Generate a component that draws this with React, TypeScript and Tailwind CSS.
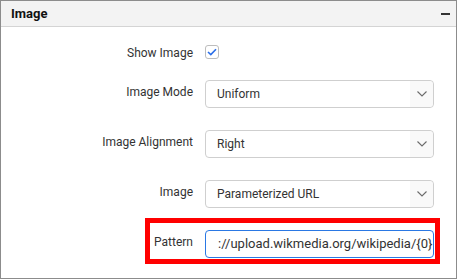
import React from "react";

function Chevron() {
  return (
    <svg width="12" height="8" viewBox="0 0 12 8" fill="none">
      <path d="M1.5 1.5 L6 6 L10.5 1.5" stroke="#6b6b6b" strokeWidth="1.1" />
    </svg>
  );
}

function Select({ value }: { value: string }) {
  return (
    <div className="flex h-[28px] w-[229px] items-stretch rounded-[4px] border border-[#cfcfcf] bg-white">
      <div className="flex flex-1 items-center pl-[11px] text-[12px] text-[#333]">{value}</div>
      <div className="flex w-[23px] items-center justify-center rounded-r-[4px] bg-[#f9f9f9]">
        <Chevron />
      </div>
    </div>
  );
}

function Label({ children }: { children: React.ReactNode }) {
  return (
    <div className="w-[192px] pb-[4px] text-right text-[12px] text-[#333]">{children}</div>
  );
}

export default function App() {
  return (
    <div
      className="h-[279px] w-[457px] border border-[#8c8c8c] bg-white"
      style={{ fontFamily: "Roboto, 'Liberation Sans', sans-serif" }}
    >
      <div className="flex h-[26px] items-center justify-between border-b border-[#d4d4d4] bg-[#f3f3f3] pl-[10px] pr-[6px]">
        <span className="text-[13px] font-bold text-[#111]">Image</span>
        <span className="h-[2px] w-[9px] bg-[#333]" />
      </div>
      <div className="flex flex-col pt-[11px]">
        <div className="flex h-[28px] items-center gap-[12px]">
          <div className="w-[192px] pt-[2px] text-right text-[12px] text-[#333]">Show Image</div>
          <div className="mb-[1px] flex h-[14px] w-[14px] items-center justify-center rounded-[3px] border border-[#bdbdbd] bg-white">
            <svg width="10" height="8" viewBox="0 0 10 8" fill="none">
              <path d="M1 4 L3.8 6.6 L9 1.2" stroke="#2a6ee8" strokeWidth="1.6" />
            </svg>
          </div>
        </div>
        <div className="mt-[14px] flex items-center gap-[12px]">
          <Label>Image Mode</Label>
          <Select value="Uniform" />
        </div>
        <div className="mt-[22px] flex items-center gap-[12px]">
          <Label>Image Alignment</Label>
          <Select value="Right" />
        </div>
        <div className="mt-[22px] flex items-center gap-[12px]">
          <Label>Image</Label>
          <Select value="Parameterized URL" />
        </div>
        <div className="relative mt-[22px] flex items-center gap-[12px]">
          <Label>Pattern</Label>
          <div className="flex h-[28px] w-[229px] items-center overflow-hidden whitespace-nowrap rounded-[4px] border border-[#2a78e4] bg-white pl-[12px] text-[13px] text-[#333]">
            ://upload.wikmedia.org/wikipedia/{"{0}"}
          </div>
          <div className="pointer-events-none absolute left-[144px] top-[-12px] h-[46px] w-[295px] border-[5px] border-[#ff0000]" />
        </div>
      </div>
    </div>
  );
}
